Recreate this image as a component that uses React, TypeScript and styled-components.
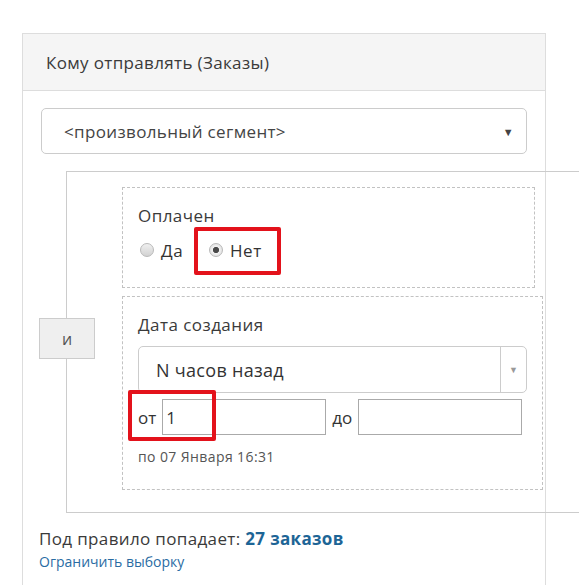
import React from "react";
import styled, { createGlobalStyle } from "styled-components";

const GlobalStyle = createGlobalStyle`
  html, body {
    margin: 0;
    padding: 0;
    background: #fff;
  }
  body {
    font-family: "Open Sans", "Liberation Sans", sans-serif;
    color: #333;
    overflow: hidden;
  }
`;

const Page = styled.div`
  position: relative;
  box-sizing: border-box;
  height: 585px;
  padding: 33px 0 0 22px;
  overflow: hidden;
`;

const Panel = styled.section`
  box-sizing: border-box;
  width: 524px;
  min-height: 560px;
  border: 1px solid #ddd;
  border-bottom: none;
`;

const PanelHeader = styled.div`
  display: flex;
  align-items: center;
  height: 56px;
  padding-left: 23px;
  background: #f5f5f5;
  border-bottom: 1px solid #ddd;
  font-size: 17px;
  letter-spacing: 0.35px;
  color: #3a3a3a;
`;

const PanelBody = styled.div`
  padding: 17px 18px 0 18px;
`;

const SegmentSelect = styled.div`
  box-sizing: border-box;
  display: flex;
  align-items: center;
  justify-content: space-between;
  height: 46px;
  padding: 0 12px 0 22px;
  border: 1px solid #ccc;
  border-radius: 5px;
  font-size: 17px;
  letter-spacing: 0.35px;
  color: #444;
`;

const Caret = styled.span<{ $muted?: boolean }>`
  font-size: ${(p) => (p.$muted ? "9px" : "11px")};
  color: ${(p) => (p.$muted ? "#999" : "#444")};
  line-height: 1;
`;

const RuleBox = styled.div`
  box-sizing: border-box;
  display: flex;
  align-items: center;
  width: 540px;
  margin: 17px 0 0 25px;
  padding: 15px 0 22px 0;
  border: 1px solid #ccc;
  border-right: none;
`;

const AndButton = styled.div`
  box-sizing: border-box;
  display: flex;
  align-items: center;
  justify-content: center;
  flex: none;
  width: 56px;
  height: 41px;
  margin: 0 27px 0 -28px;
  background: #efefef;
  border: 1px solid #ccc;
  font-size: 16px;
  color: #555;
`;

const Conditions = styled.div`
  display: flex;
  flex-direction: column;
  gap: 8px;
`;

const ConditionBox = styled.div<{ $width: number }>`
  box-sizing: border-box;
  width: ${(p) => p.$width}px;
  padding: 17px 15px ${(p) => (p.$width < 420 ? 25 : 22)}px 15px;
  border: 1px dashed #c2c2c2;
`;

const FieldLabel = styled.div`
  font-size: 17px;
  letter-spacing: 0.45px;
  line-height: 22px;
  color: #3a3a3a;
`;

const RadioRow = styled.div`
  display: flex;
  align-items: center;
  gap: 26px;
  height: 24px;
  margin-top: 11px;
  padding-left: 2px;
`;

const RadioOption = styled.label`
  position: relative;
  display: flex;
  align-items: center;
  gap: 7px;
  font-size: 17px;
  letter-spacing: 0.5px;
  color: #333;
`;

const RadioDot = styled.span<{ $checked?: boolean }>`
  box-sizing: border-box;
  display: inline-block;
  width: 14px;
  height: 14px;
  border-radius: 50%;
  border: 1px solid #b9b9b9;
  background: ${(p) =>
    p.$checked
      ? "radial-gradient(circle, #4a4a4a 0 2.8px, #f2f2f2 3.3px, #d8d8d8 100%)"
      : "linear-gradient(#f0f0f0, #d2d2d2)"};
`;

const Highlight = styled.span<{ $top: number; $left: number; $w: number; $h: number }>`
  position: absolute;
  top: ${(p) => p.$top}px;
  left: ${(p) => p.$left}px;
  width: ${(p) => p.$w}px;
  height: ${(p) => p.$h}px;
  box-sizing: border-box;
  border: 4px solid #e3121b;
  border-radius: 2px;
  pointer-events: none;
`;

const PeriodSelect = styled.div`
  box-sizing: border-box;
  display: flex;
  align-items: stretch;
  height: 47px;
  margin-top: 10px;
  border: 1px solid #ccc;
  border-radius: 5px;
  font-size: 18px;
  letter-spacing: 0.3px;
  color: #333;
`;

const PeriodValue = styled.div`
  flex: 1;
  display: flex;
  align-items: center;
  padding-left: 17px;
`;

const PeriodToggle = styled.div`
  display: flex;
  align-items: center;
  justify-content: center;
  width: 25px;
  border-left: 1px solid #ccc;
`;

const RangeRow = styled.div`
  position: relative;
  display: flex;
  align-items: center;
  gap: 6px;
  margin-top: 6px;
  font-size: 17px;
  color: #333;
`;

const RangeInput = styled.div`
  box-sizing: border-box;
  display: flex;
  align-items: center;
  width: 164px;
  height: 36px;
  padding-left: 3px;
  border: 1px solid #aaa;
  font-size: 17px;
  color: #333;
`;

const Hint = styled.div`
  margin-top: 12px;
  font-size: 14px;
  letter-spacing: 0.4px;
  line-height: 20px;
  color: #555;
`;

const Footer = styled.div`
  margin: 15px 0 0 -2px;
`;

const Summary = styled.div`
  font-size: 17px;
  letter-spacing: 0.35px;
  line-height: 22px;
  color: #3a3a3a;

  b {
    color: #1d6596;
  }
`;

const LimitLink = styled.a`
  display: block;
  margin-top: 2px;
  font-size: 14px;
  line-height: 20px;
  color: #2a6ca3;
  text-decoration: none;
`;

export default function App() {
  return (
    <>
      <GlobalStyle />
      <Page>
        <Panel>
          <PanelHeader>Кому отправлять (Заказы)</PanelHeader>
          <PanelBody>
            <SegmentSelect>
              <span>&lt;произвольный сегмент&gt;</span>
              <Caret>▼</Caret>
            </SegmentSelect>

            <RuleBox>
              <AndButton>и</AndButton>
              <Conditions>
                <ConditionBox $width={413}>
                  <FieldLabel>Оплачен</FieldLabel>
                  <RadioRow>
                    <RadioOption>
                      <RadioDot />
                      Да
                    </RadioOption>
                    <RadioOption>
                      <RadioDot $checked />
                      Нет
                      <Highlight $top={-12} $left={-15} $w={87} $h={48} />
                    </RadioOption>
                  </RadioRow>
                </ConditionBox>

                <ConditionBox $width={421}>
                  <FieldLabel>Дата создания</FieldLabel>
                  <PeriodSelect>
                    <PeriodValue>N часов назад</PeriodValue>
                    <PeriodToggle>
                      <Caret $muted>▼</Caret>
                    </PeriodToggle>
                  </PeriodSelect>
                  <RangeRow>
                    <span>от</span>
                    <RangeInput>1</RangeInput>
                    <span>до</span>
                    <RangeInput>&nbsp;</RangeInput>
                    <Highlight $top={-9} $left={-10} $w={88} $h={51} />
                  </RangeRow>
                  <Hint>по 07 Января 16:31</Hint>
                </ConditionBox>
              </Conditions>
            </RuleBox>

            <Footer>
              <Summary>
                Под правило попадает: <b>27 заказов</b>
              </Summary>
              <LimitLink href="#">Ограничить выборку</LimitLink>
            </Footer>
          </PanelBody>
        </Panel>
      </Page>
    </>
  );
}
